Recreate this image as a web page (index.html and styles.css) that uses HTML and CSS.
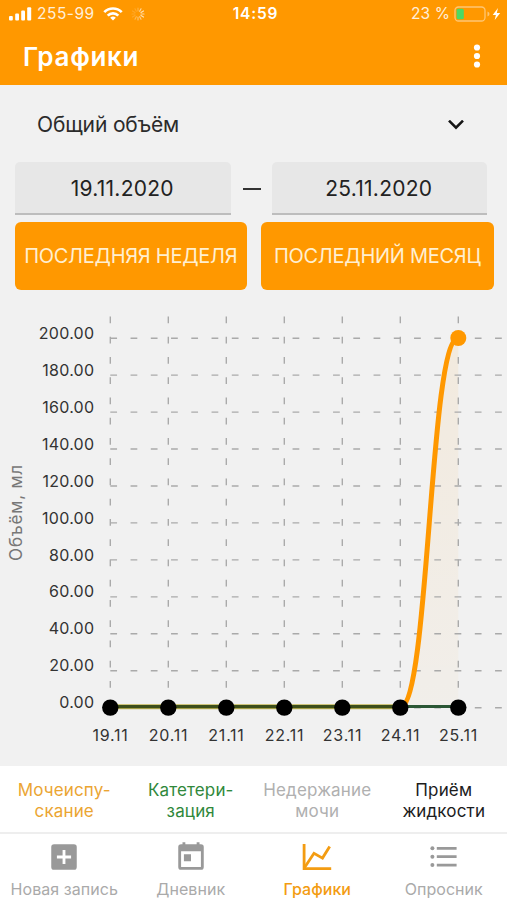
FILE: index.html
```html
<!DOCTYPE html>
<html lang="ru">
<head>
<meta charset="utf-8">
<meta name="viewport" content="width=device-width, initial-scale=1">
<title>Графики</title>
<link rel="stylesheet" href="styles.css">
</head>
<body>
<div class="app">
  <header class="top">
    <div class="status">
      <div class="status-left">
        <svg class="signal" width="24" height="14" viewBox="0 0 24 14" fill="#fff"><rect x="0" y="9" width="3.8" height="4.6" rx="1"/><rect x="6.2" y="6.5" width="3.8" height="7.1" rx="1"/><rect x="12.2" y="3.5" width="3.8" height="10.1" rx="1"/><rect x="18.2" y="0.3" width="4" height="13.3" rx="1"/></svg>
        <span class="carrier">255-99</span>
        <svg class="wifi" width="20" height="14" viewBox="0 0 20 14" fill="none" stroke="#fff" stroke-width="2.7"><path d="M1.3 5.1a12.3 12.3 0 0 1 17.4 0"/><path d="M4.7 8.6a7.5 7.5 0 0 1 10.6 0"/><path d="M10 13.6 7.2 10.8a4 4 0 0 1 5.6 0Z" fill="#fff" stroke="none"/></svg>
        <svg class="spinner" width="14" height="14" viewBox="0 0 14 14" stroke="#fff" stroke-width="1.2" stroke-linecap="round"><path d="M7 1v3" opacity=".25"/><path d="M10 1.8 8.7 4.3" opacity=".6"/><path d="M12.5 4 10 5.5" opacity=".7"/><path d="M13 7h-3" opacity=".6"/><path d="M12.5 10 10 8.5" opacity=".7"/><path d="m10 12.2-1.3-2.5" opacity=".5"/><path d="M7 13v-3" opacity=".4"/><path d="m4 12.2 1.3-2.5" opacity=".3"/><path d="M1.5 10 4 8.5M1 7h3M1.5 4 4 5.5M4 1.8l1.3 2.5" opacity=".15"/></svg>
      </div>
      <span class="clock">14:59</span>
      <div class="status-right">
        <span class="percent">23 %</span>
        <svg width="48" height="16" viewBox="0 0 48 16"><rect x="1" y="1" width="30" height="14" rx="3.5" fill="none" stroke="#fff" stroke-opacity=".45" stroke-width="1.3"/><rect x="2.6" y="2.7" width="7.2" height="10.6" rx="1.5" fill="#4cd964"/><path d="M33.5 5.5v5q2-.7 2-2.5t-2-2.5Z" fill="#fff" opacity=".45"/><path d="M44 2 38.7 8.9h3.2L40.7 14l5.5-7h-3.4Z" fill="#fff"/></svg>
      </div>
    </div>
    <div class="bar">
      <h1>Графики</h1>
      <svg width="8" height="24" viewBox="0 0 8 24" fill="#fff"><circle cx="4" cy="3.5" r="3.1"/><circle cx="4" cy="12" r="3.1"/><circle cx="4" cy="20.5" r="3.1"/></svg>
    </div>
  </header>

  <main>
    <div class="picker">
      <span>Общий объём</span>
      <svg width="16" height="10" viewBox="0 0 16 10" fill="none" stroke="#151515" stroke-width="2.6"><path d="m1 .7 7 7 7-7"/></svg>
    </div>
    <div class="dates">
      <div class="date">19.11.2020</div>
      <span class="dash"></span>
      <div class="date">25.11.2020</div>
    </div>
    <div class="ranges">
      <button class="range">ПОСЛЕДНЯЯ НЕДЕЛЯ</button>
      <button class="range">ПОСЛЕДНИЙ МЕСЯЦ</button>
    </div>
    <svg class="chart" width="507" height="467" viewBox="0 299 507 467">
      <defs><linearGradient id="area" x1="0" y1="0" x2="0" y2="1"><stop offset="0" stop-color="#ff9800" stop-opacity=".08"/><stop offset="1" stop-color="#ff9800" stop-opacity=".03"/></linearGradient></defs>
      <path d="M400.3 707.3C429.3 707.3 429.3 338 458.3 338V707.3Z" fill="url(#area)"/>
      <g class="grid">
        <path d="M110.3 316.5V707M168.3 316.5V707M226.3 316.5V707M284.3 316.5V707M342.3 316.5V707M400.3 316.5V707M458.3 316.5V707"/>
        <path d="M110.3 338.2H502M110.3 375.1H502M110.3 412.1H502M110.3 449H502M110.3 486H502M110.3 522.9H502M110.3 559.9H502M110.3 596.9H502M110.3 633.8H502M110.3 670.8H502M110.3 707.7H502"/>
      </g>
      <path class="line-volume" d="M400.3 707C429.3 707 429.3 338 458.3 338"/>
      <path class="line-edge" d="M110.3 706.8H400.3"/>
      <path class="line-base" d="M110.3 706.6H400.3"/>
      <path class="line-end" d="M400.3 706.6H458.3"/>
      <circle cx="458.3" cy="338" r="8" fill="#ff9800"/>
      <g><circle cx="110.3" cy="707.6" r="8.2"/><circle cx="168.3" cy="707.6" r="8.2"/><circle cx="226.3" cy="707.6" r="8.2"/><circle cx="284.3" cy="707.6" r="8.2"/><circle cx="342.3" cy="707.6" r="8.2"/><circle cx="400.3" cy="707.6" r="8.2"/><circle cx="458.3" cy="707.6" r="8.2"/></g>
      <g class="y-labels">
        <text x="94.3" y="338.5">200.00</text><text x="94.3" y="375.5">180.00</text><text x="94.3" y="412.5">160.00</text><text x="94.3" y="449.5">140.00</text><text x="94.3" y="486.5">120.00</text><text x="94.3" y="523.5">100.00</text><text x="94.3" y="560.5">80.00</text><text x="94.3" y="597.2">60.00</text><text x="94.3" y="634.2">40.00</text><text x="94.3" y="671.1">20.00</text><text x="94.3" y="708.1">0.00</text>
      </g>
      <g class="x-labels">
        <text x="110.5" y="740.5">19.11</text><text x="168.5" y="740.5">20.11</text><text x="226.5" y="740.5">21.11</text><text x="284.5" y="740.5">22.11</text><text x="342.5" y="740.5">23.11</text><text x="400.5" y="740.5">24.11</text><text x="458.5" y="740.5">25.11</text>
      </g>
      <text class="axis-title" transform="translate(22.3 512.5) rotate(-90)">Объём, мл</text>
    </svg>
  </main>

  <div class="legend">
    <div class="voiding">Мочеиспу-<br>скание</div>
    <div class="catheter">Катетери-<br>зация</div>
    <div class="leak">Недержание<br>мочи</div>
    <div class="intake">Приём<br>жидкости</div>
  </div>

  <nav class="tabs">
    <a class="tab"><svg width="34" height="34" viewBox="0 0 24 24" fill="#999"><path fill-rule="evenodd" d="M5 3h14a2 2 0 0 1 2 2v14a2 2 0 0 1-2 2H5a2 2 0 0 1-2-2V5a2 2 0 0 1 2-2Zm6 4v4H7v2h4v4h2v-4h4v-2h-4V7Z"/></svg><span>Новая запись</span></a>
    <a class="tab"><svg width="34" height="34" viewBox="0 0 24 24" fill="#999"><path fill-rule="evenodd" d="M19 3h-1V1.5h-2V3H8V1.5H6V3H5a2 2 0 0 0-2 2v14a2 2 0 0 0 2 2h14a2 2 0 0 0 2-2V5a2 2 0 0 0-2-2Zm0 16H5V8h14ZM7 10h5v5H7Z"/></svg><span>Дневник</span></a>
    <a class="tab active"><svg width="34" height="34" viewBox="0 0 34 34" fill="none" stroke="#f39c12" stroke-width="2.8"><path d="M4.1 4v24.7H31.2"/><path d="M4.6 27.5 14 13.3l8.5 4.8 7.2-11.7"/></svg><span>Графики</span></a>
    <a class="tab"><svg width="34" height="34" viewBox="0 0 34 34" fill="#999"><circle cx="5.4" cy="8.3" r="2"/><circle cx="5.4" cy="16.7" r="2"/><circle cx="5.4" cy="25.1" r="2"/><path d="M9.8 6.9h19.8v2.8H9.8ZM9.8 15.3h19.8v2.8H9.8ZM9.8 23.7h19.8v2.8H9.8Z"/></svg><span>Опросник</span></a>
  </nav>
</div>
</body>
</html>
```
FILE: styles.css
```css
* { box-sizing: border-box; }
body { margin: 0; font-family: Inter, Roboto, sans-serif; color: #2b2b2b; background: #f1f1f1; }
.app { width: 507px; height: 900px; display: flex; flex-direction: column; overflow: hidden; }
svg { display: block; flex: none; }

.top { height: 85px; background: #ff9800; color: #fff; }
.status { height: 27px; display: grid; grid-template-columns: 1fr auto 1fr; align-items: center; padding: 0 5px 0 9px; font-size: 15.5px; }
.status-left, .status-right { display: flex; align-items: center; }
.status-right { justify-content: flex-end; gap: 4px; }
.carrier { margin-left: 4px; letter-spacing: .5px; opacity: .85; }
.wifi { margin-left: 8px; }
.spinner { margin-left: 8px; }
.clock { font-weight: 600; letter-spacing: .8px; }
.percent { opacity: .85; letter-spacing: .1px; }
.bar { height: 58px; display: flex; align-items: center; justify-content: space-between; padding: 0 26px 0 23px; }
h1 { margin: 0; font-size: 26px; font-weight: 600; letter-spacing: .7px; }

.picker { height: 77px; display: flex; align-items: center; justify-content: space-between; padding: 2px 43px 0 37px; font-size: 21px; letter-spacing: -.15px; }
.dates { display: flex; justify-content: space-between; align-items: center; padding: 0 20px 0 15px; }
.date { width: 215.5px; height: 53px; background: #e7e7e7; border-bottom: 2px solid #bdbdbd; border-radius: 5px 5px 0 0; font-size: 21px; line-height: 53px; letter-spacing: .25px; text-indent: -1px; text-align: center; color: #222; }
.dash { width: 18px; height: 2px; margin-left: 2px; background: #333; }
.ranges { display: flex; gap: 14px; padding: 7px 13.5px 0 14.5px; }
.range { flex: 1; height: 68px; padding: 0; border: 0; border-radius: 6px; background: #ff9800; color: #ffefd0; font-family: inherit; font-size: 20px; letter-spacing: -.27px; white-space: nowrap; }
main { height: 681px; }
.chart { margin-top: 9px; }
.grid path { fill: none; stroke: #aaa; stroke-width: 1.4; stroke-dasharray: 6.75 13.5; }
.line-volume { fill: none; stroke: #ff9800; stroke-width: 5; }
.line-edge { stroke: #c3b653; stroke-width: 5; }
.line-base { stroke: #3d4f1b; stroke-width: 3.2; }
.line-end { stroke: #2b5735; stroke-width: 3; }
.y-labels, .x-labels { font-size: 16px; fill: #333; letter-spacing: .25px; }
.y-labels { text-anchor: end; }
.x-labels { letter-spacing: .75px; }
.x-labels, .axis-title { text-anchor: middle; }
.axis-title { font-size: 17px; fill: #777; letter-spacing: .8px; }

.legend { height: 68px; background: #fff; border-bottom: 2px solid #eee; display: grid; grid-template-columns: repeat(4, 1fr); padding: 14px 0 0 1px; font-size: 17px; line-height: 21px; letter-spacing: .15px; text-align: center; }
.voiding { color: #eba533; }
.catheter { color: #30883b; }
.leak { color: #b0b0b0; }
.intake { color: #1c1c1c; }

.tabs { height: 66px; background: #fff; display: grid; grid-template-columns: repeat(4, 1fr); padding-left: 1px; }
.tab { display: flex; flex-direction: column; align-items: center; padding-top: 6px; font-size: 16px; line-height: 20px; color: #aaa; letter-spacing: .05px; white-space: nowrap; }
.tab span { margin-top: 5px; }
.tab.active { color: #f39c12; }
.active span { font-weight: 500; }
```
